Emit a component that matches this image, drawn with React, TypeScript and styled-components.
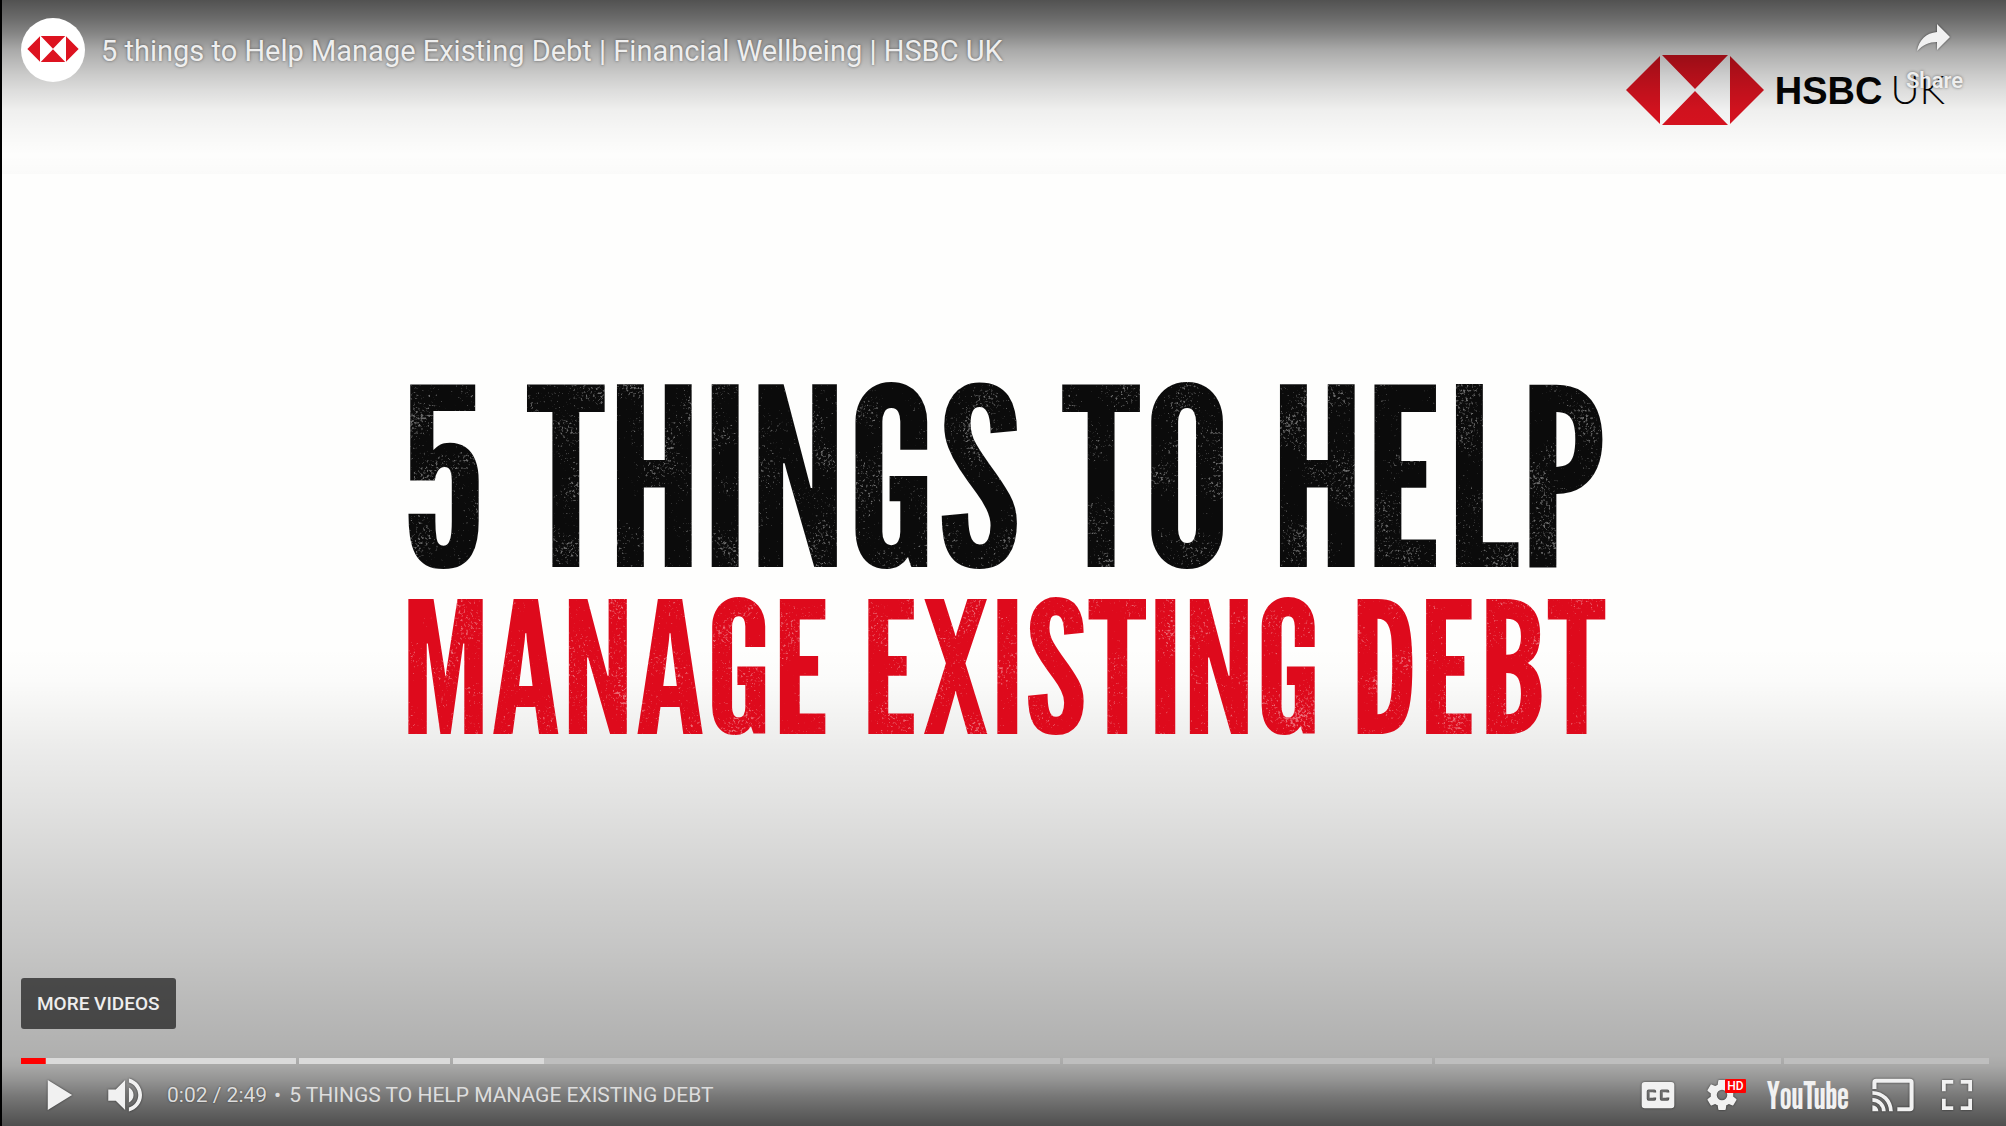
import React from "react";
import styled, { createGlobalStyle } from "styled-components";

const Global = createGlobalStyle`
  *, *::before, *::after { box-sizing: border-box; }
  body { margin: 0; background: #000; }
  button { font: inherit; color: inherit; background: none; border: 0; padding: 0; cursor: pointer; }
  h1, h2, p { margin: 0; font-weight: inherit; }
`;

const Player = styled.main`
  display: grid;
  grid-template: minmax(100vh, auto) / minmax(0, 1fr);
  margin-left: 2px;
  background: #fefefd;
  font-family: Roboto, "Liberation Sans", sans-serif;
  color: #eee;
`;

const Frame = styled.section`
  grid-area: 1 / 1;
  display: grid;
  grid-template: minmax(0, 1fr) / minmax(0, 1fr);
`;

const Brand = styled.div`
  grid-area: 1 / 1;
  place-self: start end;
  display: flex;
  align-items: center;
  gap: 11px;
  padding: 54px 61px 0 0;
  color: #050505;
`;

const BrandText = styled.p`
  display: flex;
  align-items: baseline;
  gap: 8px;
`;

const BrandName = styled.span`
  font: 700 38px / 70px "Liberation Sans", Arial, sans-serif;
`;

const BrandRegion = styled.span`
  font: 300 40px / 70px Lato, "Liberation Sans", sans-serif;
`;

const Headline = styled.div`
  grid-area: 1 / 1;
  place-self: center;
  display: flex;
  flex-direction: column;
  align-items: center;
  padding-bottom: 4px;
  font-family: "League Gothic", "Roboto Condensed", "Liberation Sans", sans-serif;
  white-space: nowrap;
  filter: url(#grit);
`;

const HeadlineRow = styled.p<{ $size: number; $height: number; $color: string }>`
  font-size: ${(p) => p.$size}px;
  line-height: ${(p) => p.$height}px;
  color: ${(p) => p.$color};
`;

const Chrome = styled.section`
  grid-area: 1 / 1;
  display: flex;
  flex-direction: column;
  background:
    linear-gradient(to bottom,
      rgba(0,0,0,.68) 0, rgba(0,0,0,.58) 18px, rgba(0,0,0,.48) 33px, rgba(0,0,0,.335) 50px,
      rgba(0,0,0,.28) 60px, rgba(0,0,0,.2) 75px, rgba(0,0,0,.135) 90px, rgba(0,0,0,.06) 110px,
      rgba(0,0,0,.03) 130px, rgba(0,0,0,.004) 155px, rgba(0,0,0,.014) 174px, transparent 174px) top / 100% 180px no-repeat,
    linear-gradient(to top,
      rgba(0,0,0,.69) 0, rgba(0,0,0,.61) 15px, rgba(0,0,0,.53) 30px, rgba(0,0,0,.42) 46px,
      rgba(0,0,0,.34) 60px, rgba(0,0,0,.31) 70px, rgba(0,0,0,.265) 126px, rgba(0,0,0,.22) 181px,
      rgba(0,0,0,.19) 226px, rgba(0,0,0,.15) 276px, rgba(0,0,0,.11) 326px, rgba(0,0,0,.07) 381px,
      rgba(0,0,0,.04) 416px, rgba(0,0,0,.01) 446px, transparent 480px) bottom / 100% 486px no-repeat;
`;

const TopBar = styled.header`
  display: flex;
  align-items: flex-start;
  gap: 16px;
  padding: 18px 43px 0 19px;
  text-shadow: 0 0 3px rgba(0, 0, 0, 0.5);
`;

const Avatar = styled.a`
  display: grid;
  place-items: center;
  width: 64px;
  height: 64px;
  padding-bottom: 2px;
  border-radius: 50%;
  background: #fff;
`;

const Title = styled.h1`
  flex: 1;
  font-size: 29px;
  line-height: 66px;
  a { color: inherit; text-decoration: none; }
`;

const Share = styled.button`
  display: flex;
  flex-direction: column;
  align-items: center;
  gap: 16px;
  padding-top: 5px;
  font-weight: 600;
  font-size: 22px;
  line-height: 24px;
  text-shadow: 0 0 3px rgba(0, 0, 0, 0.5);
`;

const Glyph = styled.svg`
  display: block;
  fill: #f1f1f1;
  overflow: visible;
  filter: drop-shadow(0 0 1px rgba(0, 0, 0, 0.6));
`;

const Bottom = styled.footer`
  margin-top: auto;
  display: flex;
  flex-direction: column;
  padding: 0 17px 0 19px;
`;

const MoreVideos = styled.button`
  align-self: flex-start;
  padding: 0 16px;
  margin-bottom: 29px;
  border-radius: 3px;
  background: rgba(23, 23, 23, 0.7);
  font-weight: 500;
  font-size: 19px;
  line-height: 51px;
`;

const Progress = styled.div`
  display: flex;
  gap: 3px;
  height: 6px;
`;

const Chapter = styled.div<{ $span: number; $loaded: number; $played: number }>`
  flex: ${(p) => p.$span} 1 0;
  background:
    linear-gradient(#f00, #f00) left / ${(p) => p.$played}% 100% no-repeat,
    linear-gradient(#dadada, #dadada) left / ${(p) => p.$loaded}% 100% no-repeat,
    #bebebe;
`;

const Controls = styled.div`
  display: flex;
  align-items: center;
  height: 62px;
  padding-left: 4px;
  text-shadow: 0 0 2px rgba(0, 0, 0, 0.5);
`;

const Control = styled.button<{ $w: number }>`
  position: relative;
  display: grid;
  place-items: center;
  width: ${(p) => p.$w}px;
  height: 62px;
`;

const Time = styled.div`
  padding-left: 6px;
  font-size: 21px;
  line-height: 24px;
  color: #ddd;
`;

const ChapterTitle = styled.button`
  display: flex;
  gap: 8px;
  padding-left: 7px;
  font-size: 21px;
  line-height: 24px;
  color: #ddd;
`;

const Spacer = styled.div`
  flex: 1;
`;

const Wordmark = styled.span`
  font: 400 38px / 38px "League Gothic", "Roboto Condensed", sans-serif;
  color: #f1f1f1;
`;

const Badge = styled.span`
  position: absolute;
  top: 15px;
  left: 35px;
  width: 21px;
  border-radius: 1px;
  background: #f00;
  font-weight: 500;
  font-size: 12px;
  line-height: 14px;
  text-align: center;
  color: #fff;
`;

const GritDefs = styled.svg`
  position: absolute;
`;

const chapters = [
  { span: 275, loaded: 100, played: 9 },
  { span: 151, loaded: 100, played: 0 },
  { span: 608, loaded: 15, played: 0 },
  { span: 369, loaded: 0, played: 0 },
  { span: 346, loaded: 0, played: 0 },
  { span: 205, loaded: 0, played: 0 },
];

function Hexagon({ width, height }: { width: number; height: number }) {
  return (
    <svg width={width} height={height} viewBox="0 0 138 70" aria-hidden="true">
      <path fill="#fff" fillOpacity=".75" d="M34 0h69v70H34z" />
      <path fill="#dd1320" d="M34 1v68L0 35zM104 1v68l34-34zM36 0h66L69 34zM36 70h66L69 36z" />
    </svg>
  );
}

function Icon({ d }: { d: string }) {
  return (
    <Glyph width="60" height="60" viewBox="2 2 32 32" aria-hidden="true">
      <path fillRule="evenodd" d={d} />
    </Glyph>
  );
}

const paths = {
  play: "M12 10v16l13-8z",
  volume:
    "M8 21h4l5 5V10l-5 5H8zM19 14v8c1.48-.68 2.5-2.23 2.5-4s-1.02-3.26-2.5-4zM19 11.29c2.89.86 5 3.54 5 6.71s-2.11 5.85-5 6.71v2.06c4.01-.91 7-4.49 7-8.77s-2.99-7.86-7-8.77z",
  captions:
    "M11 11h14a1.7 1.7 0 0 1 1.7 1.7v10.6A1.7 1.7 0 0 1 25 25H11a1.7 1.7 0 0 1-1.7-1.7V12.7A1.7 1.7 0 0 1 11 11zM17 16.7V16a1 1 0 0 0-1-1h-3a1 1 0 0 0-1 1v4a1 1 0 0 0 1 1h3a1 1 0 0 0 1-1v-.7h-1.5v.2h-2v-3h2v.2zM24 16.7V16a1 1 0 0 0-1-1h-3a1 1 0 0 0-1 1v4a1 1 0 0 0 1 1h3a1 1 0 0 0 1-1v-.7h-1.5v.2h-2v-3h2v.2z",
  settings:
    "m23.94 18.78c.03-.25.05-.51.05-.78s-.02-.52-.05-.78l1.68-1.32c.15-.12.19-.33.09-.51l-1.6-2.76c-.09-.17-.31-.24-.48-.17l-1.99.8c-.41-.32-.86-.58-1.35-.78l-.3-2.12c-.02-.19-.19-.33-.39-.33h-3.2c-.2 0-.36.14-.39.33l-.3 2.12c-.48.2-.93.47-1.35.78l-1.99-.8c-.18-.07-.39 0-.48.17l-1.6 2.76c-.1.17-.05.39.09.51l1.68 1.32c-.03.25-.05.52-.05.78s.02.52.05.78l-1.68 1.32c-.15.12-.19.33-.09.51l1.6 2.76c.09.17.31.24.48.17l1.99-.8c.41.32.86.58 1.35.78l.3 2.12c.02.19.19.33.39.33h3.2c.2 0 .36-.14.39-.33l.3-2.12c.48-.2.93-.47 1.35-.78l1.99.8c.18.07.39 0 .48-.17l1.6-2.76c.09-.17.05-.39-.09-.51zM18 20.81a2.81 2.81 0 1 1 0-5.62a2.81 2.81 0 0 1 0 5.62z",
  cast:
    "M9 9.3h18a2 2 0 0 1 2 2v13.4a2 2 0 0 1-2 2h-6.7v-2.2h6.5v-13H9.2v3.3H7v-3.5a2 2 0 0 1 2-2zM7 23.5v3.2h3.2A3.2 3.2 0 0 0 7 23.5zM7 19.6v2a5.1 5.1 0 0 1 5.1 5.1h2A7.1 7.1 0 0 0 7 19.6zM7 15.8v2a8.9 8.9 0 0 1 8.9 8.9h2A10.9 10.9 0 0 0 7 15.8z",
  fullscreen:
    "M10 16h2v-4h4v-2h-6zM20 10v2h4v4h2v-6zM24 24h-4v2h6v-6h-2zM12 20h-2v6h6v-2h-4z",
};

export default function App() {
  return (
    <Player>
      <Global />
      <GritDefs width="0" height="0" aria-hidden="true">
        <filter id="grit" x="0" y="0" width="100%" height="100%" colorInterpolationFilters="sRGB">
          <feTurbulence type="fractalNoise" baseFrequency="0.4" numOctaves="3" seed="8" result="fine" />
          <feTurbulence type="fractalNoise" baseFrequency="0.025" numOctaves="2" seed="3" result="patch" />
          <feComposite in="fine" in2="patch" operator="arithmetic" k1="0" k2="0.6" k3="0.4" k4="0" />
          <feColorMatrix values="0 0 0 0 1  0 0 0 0 1  0 0 0 0 1  0 0 0 7 -4.2" />
          <feComponentTransfer result="specks">
            <feFuncA type="linear" slope="0.4" />
          </feComponentTransfer>
          <feComposite in="specks" in2="SourceGraphic" operator="in" result="dust" />
          <feMerge>
            <feMergeNode in="SourceGraphic" />
            <feMergeNode in="dust" />
          </feMerge>
        </filter>
      </GritDefs>

      <Frame>
        <Brand>
          <Hexagon width={138} height={70} />
          <BrandText>
            <BrandName>HSBC</BrandName>
            <BrandRegion>UK</BrandRegion>
          </BrandText>
        </Brand>
        <Headline>
          <HeadlineRow $size={249} $height={212} $color="#0b0b0b">5 THINGS TO HELP</HeadlineRow>
          <HeadlineRow $size={184} $height={170} $color="#de0a1c">MANAGE EXISTING DEBT</HeadlineRow>
        </Headline>
      </Frame>

      <Chrome>
        <TopBar>
          <Avatar href="#channel" aria-label="HSBC UK channel">
            <Hexagon width={52} height={26} />
          </Avatar>
          <Title>
            <a href="#video">5 things to Help Manage Existing Debt | Financial Wellbeing | HSBC UK</a>
          </Title>
          <Share type="button">
            <Glyph width="34" height="30" viewBox="0 0 34 30" aria-hidden="true">
              <path d="M20 1l13 13-13 13v-8C12 19 6 22 0 28 2 17 9 10 20 9z" />
            </Glyph>
            Share
          </Share>
        </TopBar>

        <Bottom>
          <MoreVideos type="button">MORE VIDEOS</MoreVideos>
          <Progress role="progressbar" aria-label="Video progress" aria-valuenow={2} aria-valuemax={169}>
            {chapters.map((c, i) => (
              <Chapter key={i} $span={c.span} $loaded={c.loaded} $played={c.played} />
            ))}
          </Progress>
          <Controls>
            <Control $w={68} type="button" aria-label="Play"><Icon d={paths.play} /></Control>
            <Control $w={68} type="button" aria-label="Mute"><Icon d={paths.volume} /></Control>
            <Time>0:02 / 2:49</Time>
            <ChapterTitle type="button">
              <span>•</span>
              <span>5 THINGS TO HELP MANAGE EXISTING DEBT</span>
            </ChapterTitle>
            <Spacer />
            <Control $w={64} type="button" aria-label="Captions"><Icon d={paths.captions} /></Control>
            <Control $w={64} type="button" aria-label="Settings">
              <Icon d={paths.settings} />
              <Badge>HD</Badge>
            </Control>
            <Control $w={107} type="button"><Wordmark>YouTube</Wordmark></Control>
            <Control $w={64} type="button" aria-label="Cast"><Icon d={paths.cast} /></Control>
            <Control $w={64} type="button" aria-label="Full screen"><Icon d={paths.fullscreen} /></Control>
          </Controls>
        </Bottom>
      </Chrome>
    </Player>
  );
}
